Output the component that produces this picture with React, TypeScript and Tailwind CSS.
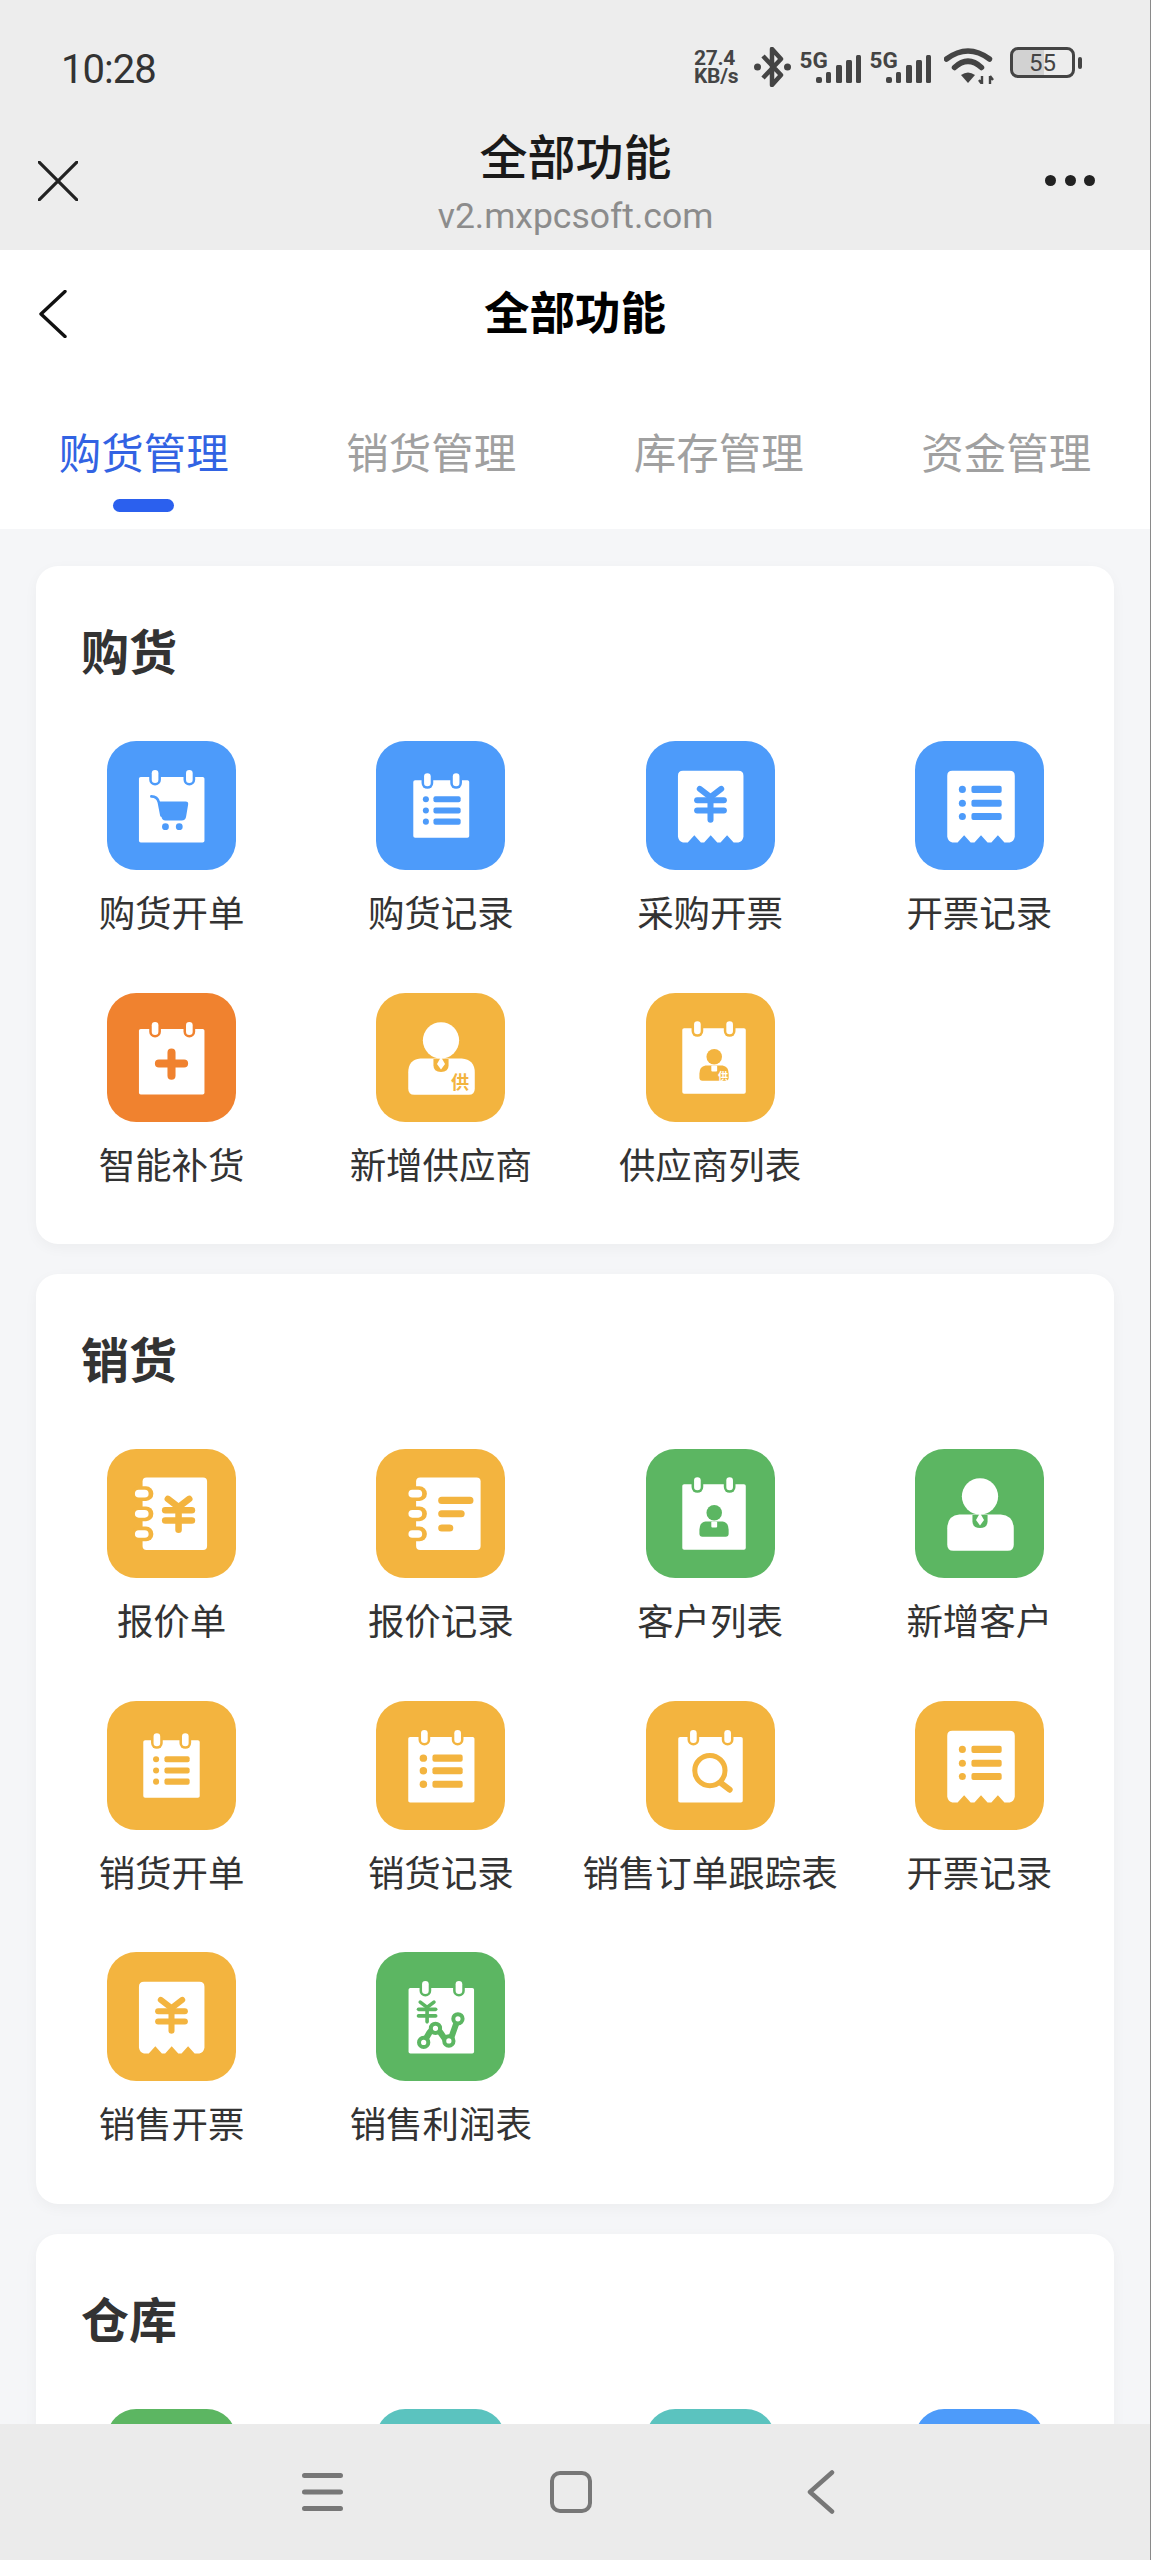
import type { ReactNode } from "react";

const BLUE = "#4d9bfa";
const DEEP = "#f0822f";
const AMBER = "#f3b43f";
const GREEN = "#5cb662";
const TEAL = "#5bc3bf";

const CJK = "'Noto Sans CJK SC', sans-serif";

// calendar page with two binder rings
function Cal({ x0, x1, y0 = 35.7, y1 = 100.7, r1, r2, c, children }: { x0: number; x1: number; y0?: number; y1?: number; r1: number; r2: number; c: string; children?: ReactNode }) {
  return (
    <>
      <rect x={x0} y={y0} width={x1 - x0} height={y1 - y0} rx={1.8} fill="#fff" />
      {[r1, r2].map((r) => (
        <g key={r}>
          <rect x={r - 5.8} y={y0 - 8} width={11.6} height={16.5} rx={5.8} fill={c} />
          <rect x={r - 3.3} y={y0 - 7} width={6.6} height={13} rx={3.3} fill="#fff" />
        </g>
      ))}
      {children}
    </>
  );
}

function ListRows({ bx, x0, x1, ys, h, r, c }: { bx: number; x0: number; x1: number; ys: number[]; h: number; r: number; c: string }) {
  return (
    <>
      {ys.map((y) => (
        <g key={y}>
          <circle cx={bx} cy={y} r={r} fill={c} />
          <rect x={x0} y={y - h / 2} width={x1 - x0} height={h} rx={2} fill={c} />
        </g>
      ))}
    </>
  );
}

function Yen({ cx, top, w, c, sw = 6 }: { cx: number; top: number; w: number; c: string; sw?: number }) {
  const a = w * 0.4;
  const s = w / 26;
  return (
    <g fill="none" stroke={c} strokeWidth={sw} strokeLinecap="round" strokeLinejoin="round">
      <path d={`M${cx - a} ${top} L${cx} ${top + 8 * s} L${cx + a} ${top}`} />
      <path d={`M${cx - w / 2} ${top + 11 * s} H${cx + w / 2}`} />
      <path d={`M${cx - w / 2} ${top + 21 * s} H${cx + w / 2}`} />
      <path d={`M${cx} ${top + 8 * s} V${top + 30 * s}`} />
    </g>
  );
}

function Receipt({ children, x0 = 31.7, x1 = 96.7 }: { children: ReactNode; x0?: number; x1?: number }) {
  const t = (x1 - x0) / 4;
  const notches = [x0 + 3 * t, x0 + 2 * t, x0 + t]
    .map((n) => `L${n + 6.5} 100.7 L${n} 93.5 L${n - 6.5} 100.7`)
    .join(" ");
  return (
    <>
      <path fill="#fff" d={`M${x0 + 5} 29.5 H${x1 - 5} Q${x1} 29.5 ${x1} 34.5 V95 Q${x1 - 1} 100 ${x1 - 5} 100.7 ${notches} L${x0 + 5} 100.7 Q${x0 + 1} 100 ${x0} 95 V34.5 Q${x0} 29.5 ${x0 + 5} 29.5 Z`} />
      {children}
    </>
  );
}

function Notebook({ dx, c, children }: { dx: number; c: string; children: ReactNode }) {
  return (
    <>
      <rect x={35.3 + dx} y={28.3} width={64} height={72} rx={4} fill="#fff" />
      {[44.3, 64.3, 84.3].map((y) => (
        <g key={y}>
          <rect x={24.5 + dx} y={y - 7.3} width={21.5} height={14.6} rx={7.3} fill={c} />
          <rect x={27.7 + dx} y={y - 3.8} width={13.6} height={7.6} rx={3.8} fill="#fff" />
        </g>
      ))}
      {children}
    </>
  );
}

function BigPerson({ c, children }: { c: string; children?: ReactNode }) {
  return (
    <>
      <circle cx={64.5} cy={47} r={18} fill="#fff" />
      <path fill="#fff" d="M44 65 H85 Q98 66 98 79 V95 Q98 101 92 101 H38 Q32 101 32 95 V79 Q32 66 44 65 Z" />
      <path fill={c} d="M57 65.5 H72 V72 Q72 78 64.5 78.5 Q57 78 57 72 Z" />
      <path fill="#fff" d="M64.5 63.5 L68.5 70.5 L64.5 76 L60.5 70.5 Z" />
      {children}
    </>
  );
}

function SmallPerson({ c, gong }: { c: string; gong?: boolean }) {
  return (
    <>
      <circle cx={67.7} cy={63.3} r={7.7} fill={c} />
      <path fill={c} d="M59 72 H76 Q82 73 82 80 V84 Q82 87 79 87 H56 Q53 87 53 84 V80 Q53 73 59 72 Z" />
      <rect x={64.8} y={72} width={5.8} height={6} rx={1} fill="#fff" />
      {gong && (
        <text x={76.5} y={86} textAnchor="middle" fontSize={10} fontWeight={700} fill="#fff" fontFamily={CJK}>
          供
        </text>
      )}
    </>
  );
}

const glyphs: Record<string, (c: string) => ReactNode> = {
  cart: (c) => (
    <Cal x0={31.7} x1={96.7} r1={47.7} r2={81.7} c={c}>
      <path d="M44 55 Q50 55 51.5 61 L54 74" fill="none" stroke={c} strokeWidth={2.6} strokeLinecap="round" />
      <path fill={c} d="M51 60 H78 Q81 60 80.5 63 L78.5 75 Q78 79 74 79 H58 Q54.5 79 54 75 Z" />
      <circle cx={58} cy={85} r={3.4} fill={c} />
      <circle cx={71.7} cy={85} r={3.4} fill={c} />
    </Cal>
  ),
  noteSmall: (c) => (
    <Cal x0={37} x1={92.5} y0={39} y1={96} r1={51} r2={79.5} c={c}>
      <ListRows bx={49.5} x0={57} x1={84} ys={[57.7, 69, 80]} h={6} r={3} c={c} />
    </Cal>
  ),
  noteTiny: (c) => (
    <Cal x0={36} x1={92} y0={39} y1={96} r1={49.5} r2={77.7} c={c}>
      <ListRows bx={48.7} x0={57} x1={82} ys={[57.7, 69, 80]} h={6} r={3} c={c} />
    </Cal>
  ),
  noteLarge: (c) => (
    <Cal x0={32} x1={97.7} r1={48} r2={81} c={c}>
      <ListRows bx={47} x0={56} x1={86} ys={[56.7, 69.3, 82.7]} h={7} r={3.7} c={c} />
    </Cal>
  ),
  receiptYen: (c) => (
    <Receipt>
      <Yen cx={64} top={47.5} w={26.5} c={c} />
    </Receipt>
  ),
  receiptList: (c) => (
    <Receipt x0={32} x1={99}>
      <ListRows bx={47} x0={56} x1={86} ys={[48, 61.7, 75]} h={7} r={3.5} c={c} />
    </Receipt>
  ),
  plus: (c) => (
    <Cal x0={31.7} x1={96.7} r1={47.7} r2={81.7} c={c}>
      <path d="M64 59 V82 M51.5 70 H76.5" stroke={c} strokeWidth={8} strokeLinecap="round" />
    </Cal>
  ),
  personGong: (c) => (
    <BigPerson c={c}>
      <text x={83.5} y={95} textAnchor="middle" fontSize={18} fontWeight={700} fill={c} fontFamily={CJK}>
        供
      </text>
    </BigPerson>
  ),
  person: (c) => <BigPerson c={c} />,
  calGong: (c) => (
    <Cal x0={36} x1={99} y0={35} y1={100} r1={51} r2={83} c={c}>
      <SmallPerson c={c} gong />
    </Cal>
  ),
  calPerson: (c) => (
    <Cal x0={36} x1={99} y0={35} y1={100} r1={51} r2={83} c={c}>
      <SmallPerson c={c} />
    </Cal>
  ),
  bookYen: (c) => (
    <Notebook dx={0} c={c}>
      <Yen cx={71} top={49.5} w={26.5} c={c} sw={6.5} />
    </Notebook>
  ),
  bookList: (c) => (
    <Notebook dx={4.5} c={c}>
      <rect x={61.7} y={47.5} width={35} height={7} rx={3.5} fill={c} />
      <rect x={61.7} y={60.8} width={26.3} height={7} rx={3.5} fill={c} />
      <rect x={61.7} y={74.8} width={15} height={7} rx={3.5} fill={c} />
    </Notebook>
  ),
  search: (c) => (
    <Cal x0={32} x1={96} r1={47} r2={81} c={c}>
      <circle cx={63.4} cy={69} r={15} fill="none" stroke={c} strokeWidth={5} />
      <path d="M74.5 81.5 L83 88" stroke={c} strokeWidth={6} strokeLinecap="round" />
    </Cal>
  ),
  profit: (c) => (
    <Cal x0={32.3} x1={97.3} r1={49} r2={82.3} c={c}>
      <Yen cx={50.7} top={49.7} w={17} c={c} sw={3.6} />
      <path d="M47.3 89.7 L53 80 Q59 72 64 80 L69 87 Q72.3 90 75 84 L81.3 66.3" fill="none" stroke={c} strokeWidth={6} strokeLinecap="round" strokeLinejoin="round" />
      {[
        [47.3, 89.7],
        [59, 75.7],
        [72.3, 88.3],
        [81.3, 66.3],
      ].map(([x, y]) => (
        <circle key={x} cx={x} cy={y} r={4.6} fill="#fff" stroke={c} strokeWidth={4} />
      ))}
    </Cal>
  ),
};

type Item = { label?: string; glyph?: string; color: string };

const sections: { title: string; items: Item[] }[] = [
  {
    title: "购货",
    items: [
      { label: "购货开单", glyph: "cart", color: BLUE },
      { label: "购货记录", glyph: "noteSmall", color: BLUE },
      { label: "采购开票", glyph: "receiptYen", color: BLUE },
      { label: "开票记录", glyph: "receiptList", color: BLUE },
      { label: "智能补货", glyph: "plus", color: DEEP },
      { label: "新增供应商", glyph: "personGong", color: AMBER },
      { label: "供应商列表", glyph: "calGong", color: AMBER },
    ],
  },
  {
    title: "销货",
    items: [
      { label: "报价单", glyph: "bookYen", color: AMBER },
      { label: "报价记录", glyph: "bookList", color: AMBER },
      { label: "客户列表", glyph: "calPerson", color: GREEN },
      { label: "新增客户", glyph: "person", color: GREEN },
      { label: "销货开单", glyph: "noteTiny", color: AMBER },
      { label: "销货记录", glyph: "noteLarge", color: AMBER },
      { label: "销售订单跟踪表", glyph: "search", color: AMBER },
      { label: "开票记录", glyph: "receiptList", color: AMBER },
      { label: "销售开票", glyph: "receiptYen", color: AMBER },
      { label: "销售利润表", glyph: "profit", color: GREEN },
    ],
  },
  {
    title: "仓库",
    items: [{ color: GREEN }, { color: TEAL }, { color: TEAL }, { color: BLUE }],
  },
];

function Tile({ item }: { item: Item }) {
  return (
    <div className="h-[251.5px] flex flex-col items-center">
      <svg width="129" height="129" viewBox="0 0 128 128" className="shrink-0">
        <rect width="128" height="128" rx="29" fill={item.color} />
        {item.glyph && glyphs[item.glyph](item.color)}
      </svg>
      {item.label && <div className="mt-[20px] text-[36.5px] leading-[50px] text-[#333] whitespace-nowrap">{item.label}</div>}
    </div>
  );
}

function Signal() {
  return (
    <svg width="64" height="40" viewBox="0 0 64 40">
      <text x="1.5" y="21" fontSize="22.5" fontWeight="700" fill="#444" fontFamily="Roboto, sans-serif">
        5G
      </text>
      <g fill="#444">
        <rect x="18" y="30" width="6" height="6" rx="2" />
        <rect x="28" y="25" width="5" height="11" rx="1.5" />
        <rect x="38" y="18" width="6" height="18" rx="1.5" />
        <rect x="48" y="13" width="6" height="23" rx="1.5" />
        <rect x="58" y="8" width="5" height="28" rx="1.5" />
      </g>
    </svg>
  );
}

function StatusBar() {
  return (
    <div className="h-[125px] flex items-start justify-between pl-[61px] pr-[68px] pt-[45px]">
      <div className="text-[40px] leading-[50px] text-[#333] tracking-[-1px]">10:28</div>
      <div className="flex items-start pt-[2px]">
        <div className="w-[50px] text-[21px] leading-[18px] font-bold text-[#444] mt-[2px] tracking-[-0.3px] whitespace-nowrap">
          27.4
          <br />
          KB/s
        </div>
        <svg width="37" height="40" viewBox="0 0 37 40" className="ml-[10px]" fill="none">
          <path d="M9 9 L27 28 L18 38 V2 L27 12 L9 31" stroke="#444" strokeWidth="4.5" strokeLinejoin="round" />
          <circle cx="3.5" cy="20" r="3.5" fill="#444" />
          <circle cx="33.5" cy="20" r="3.5" fill="#444" />
        </svg>
        <div className="ml-[7px]">
          <Signal />
        </div>
        <div className="ml-[6px]">
          <Signal />
        </div>
        <svg width="50" height="36" viewBox="0 0 50 36" className="ml-[12px] mt-[1px]" fill="none">
          <path d="M2.5 11 Q24 -5 45.5 11" stroke="#444" strokeWidth="5.5" strokeLinecap="round" />
          <path d="M10.5 19.5 Q24 7 37.5 19.5" stroke="#444" strokeWidth="5.5" strokeLinecap="round" />
          <path d="M17 27 Q24 22 31 27 L24 35 Z" fill="#444" />
          <path d="M38 28 V36 M35 32 L38 36 M46 36 V28 M46 28 L49 32" stroke="#444" strokeWidth="2.4" />
        </svg>
        <div className="ml-[16px] flex items-center">
          <div className="w-[65px] h-[31px] rounded-[8px] border-[3.5px] border-[#444] flex items-center justify-center text-[24px] leading-none text-[#444] bg-[linear-gradient(90deg,#d2d2d2_52%,transparent_52%)] bg-origin-padding">
            55
          </div>
          <div className="ml-[3px] w-[4px] h-[12px] rounded-full bg-[#444]" />
        </div>
      </div>
    </div>
  );
}

function BrowserBar() {
  return (
    <div className="h-[125px] grid grid-cols-[1fr_auto_1fr] items-start pl-[38px] pr-[55px]">
      <svg width="40" height="40" viewBox="0 0 40 40" className="mt-[36px]" fill="none">
        <path d="M1 1 L39 39 M39 1 L1 39" stroke="#222" strokeWidth="3.2" strokeLinecap="round" />
      </svg>
      <div className="flex flex-col items-center pt-[2px] translate-x-[9px]">
        <div className="text-[48px] leading-[64px] font-medium text-[#1a1a1a] whitespace-nowrap">全部功能</div>
        <div className="text-[35.5px] leading-[50px] text-[#8c8c8c] whitespace-nowrap">v2.mxpcsoft.com</div>
      </div>
      <div className="mt-[50px] justify-self-end w-[50px] flex justify-between">
        <span className="w-[11px] h-[11px] rounded-full bg-[#222]" />
        <span className="w-[11px] h-[11px] rounded-full bg-[#222]" />
        <span className="w-[11px] h-[11px] rounded-full bg-[#222]" />
      </div>
    </div>
  );
}

function Tabs() {
  const tabs = ["购货管理", "销货管理", "库存管理", "资金管理"];
  return (
    <div className="grid grid-cols-4 h-[129px]">
      {tabs.map((t, i) => (
        <div key={t} className="flex flex-col items-center">
          <div className={`mt-[25px] text-[42.5px] leading-[60px] whitespace-nowrap ${i === 0 ? "text-[#3263e3]" : "text-[#a0a0a0]"}`}>{t}</div>
          {i === 0 && <div className="mt-[14px] w-[61px] h-[13px] rounded-full bg-[#2b60ee]" />}
        </div>
      ))}
    </div>
  );
}

export default function App() {
  return (
    <div className="w-[1151px] h-[2560px] flex flex-col overflow-hidden border-r border-[#8a8a8a] bg-[#f5f6f8] font-['Roboto','Noto_Sans_CJK_SC',sans-serif]">
      <div className="bg-[#ededed] shrink-0">
        <StatusBar />
        <BrowserBar />
      </div>

      <div className="bg-white shrink-0">
        <div className="h-[150px] relative flex items-start justify-center">
          <svg width="28" height="48" viewBox="0 0 28 48" className="absolute left-[39px] top-[40px]" fill="none">
            <path d="M26 1.5 L2 24 L26 46.5" stroke="#111" strokeWidth="3.4" strokeLinecap="round" strokeLinejoin="round" />
          </svg>
          <div className="mt-[34px] text-[45.5px] leading-[62px] font-bold text-black">全部功能</div>
        </div>
        <Tabs />
      </div>

      <div className="flex-1 min-h-0 overflow-hidden px-[36px] pt-[37px]">
        {sections.map((s) => (
          <section key={s.title} className="mb-[30px] rounded-[22px] bg-white shadow-[0_4px_14px_rgba(0,0,0,0.04)]">
            <div className="h-[175px] pl-[45px] pt-[56px]">
              <h2 className="text-[48px] leading-[64px] font-bold text-[#333]">{s.title}</h2>
            </div>
            <div className="grid grid-cols-4 pl-[1px]">
              {s.items.map((item, i) => (
                <Tile key={i} item={item} />
              ))}
            </div>
          </section>
        ))}
      </div>

      <div className="h-[136px] shrink-0 bg-[#ebebeb] flex items-center pl-[302px]">
        <svg width="41" height="40" viewBox="0 0 41 40" fill="none">
          <path d="M2.5 3.5 H38.5 M2.5 20 H38.5 M2.5 36.5 H38.5" stroke="#777" strokeWidth="5" strokeLinecap="round" />
        </svg>
        <div className="ml-[207px] w-[42px] h-[42px] rounded-[10px] border-[4.5px] border-[#777]" />
        <svg width="28" height="44" viewBox="0 0 28 44" className="ml-[215px]" fill="none">
          <path d="M25 2.5 L3 22 L25 41.5" stroke="#777" strokeWidth="4.5" strokeLinecap="round" strokeLinejoin="round" />
        </svg>
      </div>
    </div>
  );
}
